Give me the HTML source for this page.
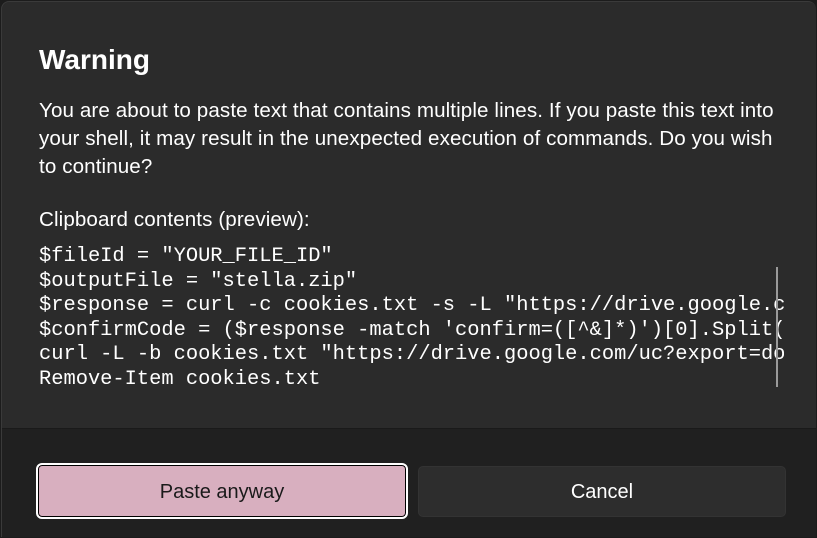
<!DOCTYPE html><html><head><style>
html,body{margin:0;width:817px;height:538px;overflow:hidden}
body{background:#1c1c1c;font-family:"Liberation Sans",sans-serif;color:#fff;position:relative}
.d{position:absolute;left:1px;top:1px;width:815px;height:536px;background:#2b2b2b;border-radius:8px 8px 0 0;border-top:1px solid #3a3a3a;border-left:1px solid #3a3a3a;overflow:hidden;box-sizing:border-box}
.f{position:absolute;left:0;top:426px;width:100%;height:110px;background:#202020;border-top:1px solid #1a1a1a}
.t{position:absolute;left:39px;top:44px;font-size:28px;font-weight:600}
.p{position:absolute;left:39px;top:97px;font-size:20.6px;line-height:28px;white-space:nowrap;letter-spacing:0.1px}
.c{position:absolute;left:39px;top:208px;font-size:20.6px;white-space:nowrap;letter-spacing:0.1px}
.m{position:absolute;left:39px;top:245px;width:745px;overflow:hidden;font-family:"Liberation Mono",monospace;font-size:20.4px;line-height:24.6px;white-space:pre}
.sb{position:absolute;left:776px;top:267px;width:2px;height:120px;background:#9a9a9a}
.b1{position:absolute;left:36px;top:463px;width:368px;height:52px;background:#d8afbf;border:2px solid #fff;border-radius:6px;box-shadow:inset 0 0 0 1px #000;color:#1a1a1a;font-size:20px;text-align:center;line-height:54px}
.b2{position:absolute;left:418px;top:466px;width:366px;height:49px;background:#2d2d2d;border:1px solid #333;border-radius:5px;font-size:20px;text-align:center;line-height:50px}
</style></head><body>
<div class="d"><div class="f"></div></div>
<div class="t">Warning</div>
<div class="p">You are about to paste text that contains multiple lines. If you paste this text into<br>your shell, it may result in the unexpected execution of commands. Do you wish<br>to continue?</div>
<div class="c">Clipboard contents (preview):</div>
<div class="m">$fileId = "YOUR_FILE_ID"
$outputFile = "stella.zip"
$response = curl -c cookies.txt -s -L "https://drive.google.com
$confirmCode = ($response -match 'confirm=([^&]*)')[0].Split(
curl -L -b cookies.txt "https://drive.google.com/uc?export=do
Remove-Item cookies.txt</div>
<div class="sb"></div>
<div class="b1">Paste anyway</div>
<div class="b2">Cancel</div>
</body></html>
